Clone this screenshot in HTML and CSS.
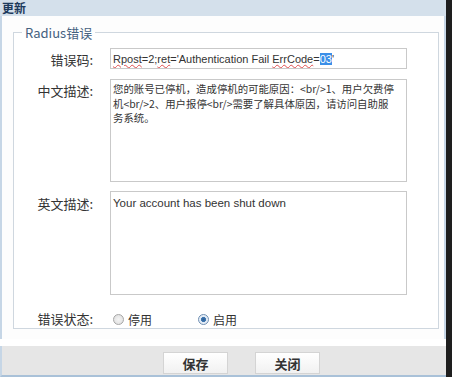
FILE: index.html
```html
<!DOCTYPE html>
<html lang="zh-CN">
<head>
    <meta charset="UTF-8">
    <title>更新</title>
    <link rel="stylesheet" href="styles.css">
</head>
<body>
    <div class="window">
        <div class="title">更新</div>
        <div class="content">
            <fieldset class="group">
                <legend>Radius错误</legend>
                <div class="form">
                    <label class="label">错误码:</label>
                    <div class="field input"><span class="spell">Rpost</span>=2;<span class="spell">ret</span>='Authentication Fail <span class="spell">ErrCode</span>=<span class="sel">03</span>'</div>

                    <label class="label">中文描述:</label>
                    <div class="field area cn">您的账号已停机，造成停机的可能原因：&lt;br/&gt;1、用户欠费停<br>机&lt;br/&gt;2、用户报停&lt;br/&gt;需要了解具体原因，请访问自助服<br>务系统。</div>

                    <label class="label">英文描述:</label>
                    <div class="field area en">Your account has been shut down</div>

                    <label class="label status">错误状态:</label>
                    <div class="radios">
                        <span class="radio"><i class="dot"></i>停用</span>
                        <span class="radio on"><i class="dot"></i>启用</span>
                    </div>
                </div>
            </fieldset>
        </div>
        <div class="footer">
            <button class="btn">保存</button>
            <button class="btn">关闭</button>
        </div>
    </div>
    <div class="edge"></div>
</body>
</html>
```
FILE: styles.css
```css
body {
    margin: 0;
    width: 452px;
    height: 377px;
    display: flex;
    overflow: hidden;
    font-family: "Noto Sans CJK SC", "Liberation Sans", sans-serif;
    font-size: 12px;
    color: #333;
    background: #fff;
}
.window {
    width: 446px;
    display: flex;
    flex-direction: column;
}
.edge {
    flex: 1;
    background: #1e1e1e;
}
.title {
    height: 16px;
    line-height: 15px;
    padding-left: 2px;
    background: #d4e0eb;
    color: #1d3a5c;
    font-weight: bold;
    font-size: 12px;
}
.content {
    flex: 1;
    background: #fdfdfd;
    border-left: 2px solid #c6d6e6;
    border-right: 2px solid #c6d6e6;
    padding: 9px 5px 0 11px;
}
.group {
    margin: 0;
    padding: 0;
    height: 302px;
    border: 1px solid #cfd7df;
    background: #fff;
}
.group legend {
    margin-left: 8px;
    padding: 0 3px;
    font-size: 13px;
    line-height: 15px;
    color: #45617f;
}
.form {
    display: grid;
    grid-template-columns: 79px 297px;
    column-gap: 17px;
    row-gap: 10px;
    padding-top: 8px;
}
.label {
    text-align: right;
    font-size: 13px;
    line-height: 15px;
    padding-top: 4px;
    color: #333;
}
.field {
    box-sizing: border-box;
    border: 1px solid #c9c9c9;
    background: #fff;
    padding: 2px 2px;
    font-family: "Liberation Sans", "Noto Sans CJK SC", sans-serif;
    color: #333;
}
.input {
    height: 21px;
    line-height: 16px;
    font-size: 11px;
    white-space: nowrap;
    overflow: hidden;
}
.spell {
    text-decoration: underline wavy #e05050;
    text-decoration-thickness: 1px;
}
.sel {
    background: #3b8fe8;
    color: #fff;
}
.area {
    font-size: 11.5px;
    line-height: 14.5px;
}
.cn {
    height: 103px;
    font-family: "Noto Sans CJK SC", sans-serif;
    font-size: 10.4px;
    white-space: nowrap;
    overflow: hidden;
}
.en {
    height: 104px;
    margin-top: -1px;
    padding-top: 4px;
}
.status {
    padding-top: 6px;
}
.radios {
    display: flex;
    gap: 46px;
    padding: 7px 0 0 3px;
    font-size: 12px;
    line-height: 15px;
}
.radio {
    display: flex;
    align-items: center;
    gap: 4px;
}
.dot {
    box-sizing: border-box;
    width: 11px;
    height: 11px;
    border-radius: 50%;
    border: 1px solid #a6a6a6;
    background: radial-gradient(circle, #f4f4f4 0, #dcdcdc 100%);
}
.radio.on .dot {
    border-color: #6f8fb3;
    background: radial-gradient(circle, #2f5f94 0, #3f76b0 35%, #dfe9f4 45%, #f4f7fb 100%);
}
.footer {
    height: 29px;
    background: #e6e6e6;
    border-bottom: 2px solid #a9c1d8;
    border-left: 2px solid #c6d6e6;
    display: flex;
    align-items: flex-end;
    gap: 27px;
    padding-left: 161px;
    margin-top: 7px;
}
.btn {
    width: 65px;
    height: 22px;
    margin-bottom: 1px;
    border: 1px solid #d4d4d4;
    background: linear-gradient(#ffffff, #f1f1f1);
    font-family: "Noto Sans CJK SC", sans-serif;
    font-size: 13px;
    font-weight: bold;
    color: #333;
    padding: 0;
}
```
